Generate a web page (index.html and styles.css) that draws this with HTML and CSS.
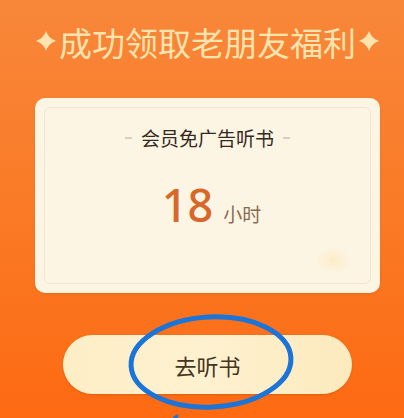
FILE: index.html
```html
<!DOCTYPE html>
<html lang="zh">
<head>
<meta charset="utf-8">
<link rel="stylesheet" href="styles.css">
</head>
<body>
<div class="page">
  <div class="title">
    <svg class="spark" width="20" height="20" viewBox="0 0 20 20"><path d="M10 0 Q12.5 7.5 20 10 Q12.5 12.5 10 20 Q7.5 12.5 0 10 Q7.5 7.5 10 0Z" fill="#fde3ae"/></svg>
    <span class="title-text">成功领取老朋友福利</span>
    <svg class="spark" width="20" height="20" viewBox="0 0 20 20"><path d="M10 0 Q12.5 7.5 20 10 Q12.5 12.5 10 20 Q7.5 12.5 0 10 Q7.5 7.5 10 0Z" fill="#fde3ae"/></svg>
  </div>
  <div class="card">
    <div class="card-inner">
      <div class="sub"><span class="dash"></span><span>会员免广告听书</span><span class="dash"></span></div>
      <div class="amount"><span class="num">18</span><span class="unit">小时</span></div>
      <div class="deco"></div>
    </div>
  </div>
  <div class="btn-wrap">
    <div class="btn">去听书</div>
    <svg class="circle" width="180" height="110" viewBox="0 0 180 110">
      <ellipse cx="90" cy="52" rx="80" ry="45" fill="none" stroke="#1b74d8" stroke-width="5" transform="rotate(-3 90 52)"/>
      <path d="M56 106 Q52 109 50 112" fill="none" stroke="#1b74d8" stroke-width="3" stroke-linecap="round"/>
    </svg>
  </div>
</div>
</body>
</html>
```
FILE: styles.css
```css
html, body {
  margin: 0;
  padding: 0;
}
body {
  width: 404px;
  height: 418px;
  overflow: hidden;
  background: linear-gradient(180deg, #f8873a 0%, #fa7a26 50%, #fd6a12 100%);
  font-family: "Noto Sans CJK SC", "Noto Sans", sans-serif;
}
.page {
  display: flex;
  flex-direction: column;
  align-items: center;
  padding-left: 11px;
  padding-top: 22px;
}
.title {
  display: flex;
  align-items: center;
  height: 40px;
  color: #fde3ae;
}
.title-text {
  font-size: 33px;
  line-height: 40px;
  margin: 0 3px;
}
.spark {
  display: block;
  margin-top: -3px;
}
.card {
  margin-top: 36px;
  width: 345px;
  height: 195px;
  box-sizing: border-box;
  background: #fdf5e4;
  border-radius: 10px;
  padding: 9px;
  box-shadow: 0 1px 2px rgba(180, 80, 10, 0.25);
}
.card-inner {
  position: relative;
  height: 100%;
  box-sizing: border-box;
  border: 1px solid #f3e5c8;
  border-radius: 6px;
  padding-top: 17px;
  display: flex;
  flex-direction: column;
  align-items: center;
}
.sub {
  display: flex;
  align-items: center;
  gap: 9px;
  font-size: 19px;
  line-height: 26px;
  color: #35291e;
}
.dash {
  width: 7px;
  height: 1.5px;
  background: #d9cfbf;
}
.amount {
  margin-top: 29px;
  display: flex;
  align-items: baseline;
  gap: 10px;
  padding-left: 8px;
}
.num {
  font-family: "Noto Sans", sans-serif;
  font-size: 45px;
  line-height: 50px;
  color: #d8682a;
  font-weight: 500;
}
.unit {
  font-size: 19px;
  color: #8a6b52;
}
.deco {
  position: absolute;
  right: 18px;
  bottom: 12px;
  width: 38px;
  height: 26px;
  border-radius: 14px 14px 4px 4px;
  background: radial-gradient(ellipse at 50% 60%, rgba(248, 226, 170, 0.45), rgba(253, 245, 228, 0) 70%);
}
.btn-wrap {
  position: relative;
  margin-top: 42px;
}
.btn {
  width: 289px;
  height: 59px;
  border-radius: 30px;
  background: linear-gradient(90deg, #fdeec6 0%, #fef1cf 50%, #fdeabd 100%);
  display: flex;
  align-items: center;
  justify-content: center;
  font-size: 22px;
  color: #47341f;
  box-shadow: 0 1px 2px rgba(160, 60, 0, 0.3);
}
.circle {
  position: absolute;
  left: 58px;
  top: -25px;
}
```
